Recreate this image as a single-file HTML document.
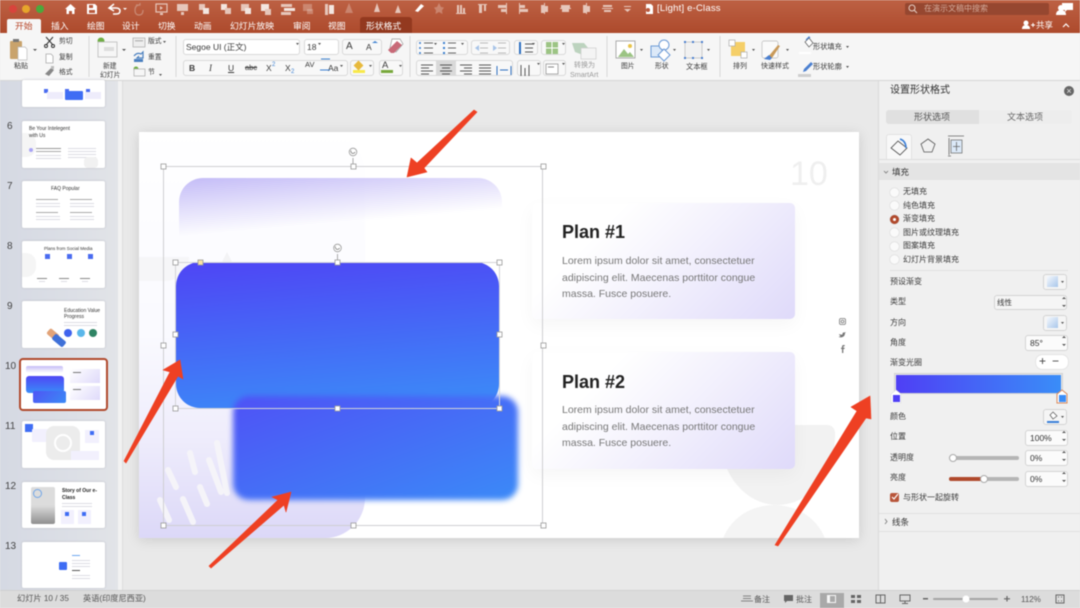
<!DOCTYPE html>
<html><head><meta charset="utf-8"><style>
*{box-sizing:border-box}
html,body{margin:0;padding:0}
body{width:1080px;height:608px;overflow:hidden;position:relative;background:#e9e9e9;font-family:"Liberation Sans","Noto Sans CJK SC",sans-serif;color:#333}
div,span.t{position:absolute}
.t{position:absolute;white-space:nowrap;font-size:8px;line-height:12px;color:#3a3a3a}
.w{color:#fff;font-size:8.8px}
.b{background:#f8f8f8;border:1px solid #d9d9d9;border-radius:3px}
.th{left:22px;width:83px;background:#fff;border-radius:2px;box-shadow:0 0 2px #b9b9c0;overflow:hidden}
.n{position:absolute;left:7px;font-size:10px;color:#444;line-height:12px}
.l{position:absolute;height:1px;background:#dcdce4}
.r{position:absolute;left:889.500px;width:9px;height:9px;border-radius:50%;background:#fafafa;box-shadow:0 0 1px #aaa}
.f{position:absolute;background:#fbfbfb;border:1px solid #d4d4d4;border-radius:3px;font-size:8.500px;line-height:14px;padding-left:4px;color:#333}
.s{position:absolute;background:#f5f5f5;border:1px solid #d4d4d4;border-radius:3px}
.card{position:absolute;left:532px;width:263px;border-radius:5px;background:linear-gradient(135deg,#fff 25%,#f3f1fd 55%,#dfdafa 100%);box-shadow:0 6px 18px rgba(0,0,0,.04)}
</style></head><body>
<div style="left:0;top:0;width:1080px;height:608px;overflow:hidden;filter:blur(.4px)">

<!-- title bar -->
<div style="left:0;top:0;width:1080px;height:33px;background:linear-gradient(#bd6144,#ad4a2c)"></div>
<div style="left:0;top:33px;width:1080px;height:48px;background:#f6f6f6;border-bottom:1px solid #d6d6d6"></div>
<div style="left:7px;top:19px;width:34px;height:14px;background:#f6f6f6;border-radius:2px 2px 0 0"></div>
<div style="left:360px;top:17px;width:52px;height:16px;background:#93391f;border-radius:3px 3px 0 0"></div>
<span class="t" style="left:15px;top:20px;font-size:8.800px;color:#b8472a">开始</span>
<span class="t w" style="left:51px;top:20px">插入</span>
<span class="t w" style="left:87px;top:20px">绘图</span>
<span class="t w" style="left:122px;top:20px">设计</span>
<span class="t w" style="left:158px;top:20px">切换</span>
<span class="t w" style="left:194px;top:20px">动画</span>
<span class="t w" style="left:230px;top:20px">幻灯片放映</span>
<span class="t w" style="left:293px;top:20px">审阅</span>
<span class="t w" style="left:328px;top:20px">视图</span>
<span class="t w" style="left:366px;top:20px">形状格式</span>
<span class="t w" style="left:657px;top:3px;font-size:9.500px;letter-spacing:.2px">[Light] e-Class</span>
<div style="left:905px;top:3px;width:144px;height:12px;background:#964730;border-radius:2px"></div>
<span class="t" style="left:924px;top:3px;color:#d3a999;font-size:8px">在演示文稿中搜索</span>
<span class="t w" style="left:1036px;top:19px;font-size:8.500px">共享</span>

<!-- window/title icons -->
<svg style="position:absolute;left:0;top:0" width="1080" height="81" fill="#f3e6e0">
<circle cx="13" cy="9" r="4" fill="#d8443c"/><circle cx="26" cy="9" r="4" fill="#e7a52c"/><circle cx="40" cy="9" r="4" fill="#4aa93c"/>
<path d="M65 9l5.500-5 5.500 5h-1.500v5h-2.500v-3h-3v3h-2.500v-5z" fill="#fff"/>
<path d="M87 4h8l2 2v8h-10z" fill="#fff"/><rect x="89" y="5" width="4" height="3" fill="#b9583c"/><rect x="89" y="10" width="6" height="3" fill="#b9583c"/>
<path d="M114 4l-5 4 5 3M110 8h6q4 0 4 3t-4 3h-3" fill="none" stroke="#fff" stroke-width="1.500"/>
<path d="M123 8h4l-2 2z" fill="#fff"/>
<path d="M136 5h4v-2M140 5q-5 0-5 5t4 5 4-5" fill="none" stroke="#c98a75" stroke-width="1.200"/>
<g fill="#e6c6ba">
<rect x="156" y="4" width="11" height="8" fill="none" stroke="#e6c6ba" stroke-width="1.200"/><path d="M160 6l3 2-3 2z"/><rect x="160" y="13" width="3" height="2"/>
<rect x="177" y="4" width="11" height="7"/><rect x="181" y="12" width="3" height="3"/>
<rect x="199" y="4" width="6" height="6"/><rect x="203" y="8" width="6" height="6" fill="#f3e6e0"/>
<rect x="221" y="4" width="6" height="6" fill="#f3e6e0"/><rect x="225" y="8" width="6" height="6"/>
<rect x="241" y="4" width="8" height="7"/><rect x="245" y="8" width="6" height="6" fill="#f3e6e0"/>
<rect x="261" y="4" width="8" height="7" fill="#f3e6e0"/><rect x="265" y="9" width="6" height="6"/>
<rect x="281" y="4" width="11" height="3"/><rect x="284" y="8" width="11" height="3" fill="#f3e6e0"/><rect x="281" y="12" width="10" height="3"/>
<rect x="303" y="4" width="9" height="7" opacity=".4"/><rect x="307" y="9" width="6" height="5" opacity=".4"/>
<rect x="325" y="4" width="3" height="11"/><rect x="329" y="5" width="5" height="9" fill="#f3e6e0"/>
<path d="M349 3l4 10h-8z" opacity=".4"/>
<path d="M377 3l3 9h-6z"/><path d="M398 5l3 8h-6z"/><path d="M415 11l6-7 3 2-6 6z" fill="#fff"/>
<path d="M439 3l2 4 3 .5-2 3 .5 3.500-3.500-2-3.500 2 .5-3.500-2-3 3-.5z" opacity=".4"/>
<rect x="457" y="5" width="2" height="8"/><rect x="460" y="5" width="2" height="8"/><rect x="463" y="8" width="2" height="5"/><rect x="456" y="13" width="10" height="1"/>
<rect x="478" y="4" width="9" height="1"/><rect x="479" y="5" width="3" height="8"/><rect x="484" y="5" width="2" height="6"/>
<rect x="498" y="5" width="8" height="3"/><rect x="501" y="9" width="5" height="3"/><rect x="506" y="3" width="1" height="11"/>
<rect x="519" y="3" width="1" height="11"/><rect x="520" y="5" width="5" height="3"/><rect x="520" y="9" width="8" height="3"/>
<rect x="541" y="5" width="3" height="8"/><rect x="545" y="6" width="3" height="6"/><rect x="544" y="3" width="1" height="11"/>
<rect x="561" y="5" width="9" height="3"/><rect x="562" y="9" width="7" height="3"/><rect x="560" y="8" width="11" height="1"/>
<rect x="583" y="5" width="3" height="8"/><rect x="587" y="6" width="3" height="6"/><rect x="586" y="3" width="1" height="11"/>
<rect x="603" y="5" width="9" height="2"/><rect x="602" y="8" width="11" height="1"/><rect x="604" y="10" width="7" height="2"/>
<rect x="624" y="6" width="7" height="1"/><path d="M624 9h7l-3.500 3z"/>
<path d="M646 4h5l2 2v8h-7z" fill="#fff"/><circle cx="648" cy="10" r="2" fill="#b9583c"/>
</g>
<circle cx="912" cy="8" r="3" fill="none" stroke="#e6cfc5"/><path d="M914 10l3 3" stroke="#e6cfc5"/>
<path d="M1062 3h11v7h-6l-2 2v-2h-3z" fill="#fff"/><circle cx="1061" cy="8" r="3" fill="#fff"/><path d="M1056 15q0-5 5-5t5 5z" fill="#fff"/>
<circle cx="1026" cy="23" r="2.500" fill="#fff"/><path d="M1022 29q0-4 4-4t4 4z" fill="#fff"/><path d="M1031 25h4M1033 23v4" stroke="#fff"/>
<path d="M1063 27l3-3 3 3" fill="none" stroke="#fff" stroke-width="1.200"/>
</svg>

<!-- ribbon texts -->
<span class="t" style="left:14px;top:61px;font-size:7px">粘贴</span>
<span class="t" style="left:59px;top:36px;font-size:6.800px">剪切</span>
<span class="t" style="left:59px;top:52px;font-size:6.800px">复制</span>
<span class="t" style="left:59px;top:67px;font-size:6.800px">格式</span>
<span class="t" style="left:103px;top:61px;font-size:6.800px">新建</span>
<span class="t" style="left:100px;top:70px;font-size:6.800px">幻灯片</span>
<span class="t" style="left:148px;top:36px;font-size:6.800px">版式</span>
<span class="t" style="left:148px;top:52px;font-size:6.800px">重置</span>
<span class="t" style="left:148px;top:67px;font-size:6.800px">节</span>

<div class="b" style="left:183px;top:39px;width:117px;height:16px;background:#fff"></div>
<span class="t" style="left:186px;top:41px;font-size:8.500px">Segoe UI (正文)</span>
<div class="b" style="left:304px;top:39px;width:35px;height:16px;background:#fff"></div>
<span class="t" style="left:307px;top:41px;font-size:8.500px">18</span>
<div class="b" style="left:342px;top:39px;width:40px;height:16px"></div>
<span class="t" style="left:346px;top:41px;font-size:10px;line-height:12px">A</span>
<span class="t" style="left:366px;top:41px;font-size:8.500px">A</span>
<div class="b" style="left:183px;top:60px;width:165px;height:16px"></div>
<span class="t" style="left:189px;top:62px;font-weight:bold;font-size:8.500px">B</span>
<span class="t" style="left:209px;top:62px;font-style:italic;font-size:9px;font-family:'Liberation Serif',serif">I</span>
<span class="t" style="left:228px;top:62px;text-decoration:underline;font-size:8.500px">U</span>
<span class="t" style="left:245px;top:62px;text-decoration:line-through;font-size:7.500px">abc</span>
<span class="t" style="left:266px;top:62px;font-size:8.500px">X</span><span class="t" style="left:272px;top:59px;font-size:6px;color:#3a7fd0">2</span>
<span class="t" style="left:285px;top:62px;font-size:8.500px">X</span><span class="t" style="left:291px;top:66px;font-size:6px;color:#3a7fd0">2</span>
<span class="t" style="left:305px;top:59px;font-size:7.500px">AV</span>
<span class="t" style="left:328px;top:62px;font-size:8.500px">Aa</span>
<div class="b" style="left:350px;top:60px;width:24px;height:16px"></div>
<div class="b" style="left:379px;top:60px;width:24px;height:16px"></div>
<span class="t" style="left:382px;top:60px;font-size:9.500px">A</span>
<div style="left:381px;top:70px;width:12px;height:3px;background:#78a83c"></div>
<div style="left:353px;top:70px;width:12px;height:3px;background:#f8e94a"></div>
<div style="left:355px;top:62px;width:7px;height:7px;background:#e7b93c;transform:rotate(45deg)"></div>

<div class="b" style="left:416px;top:40px;width:52px;height:15px"></div>
<div class="b" style="left:471px;top:40px;width:39px;height:15px"></div>
<div class="b" style="left:514px;top:40px;width:24px;height:15px"></div>
<div class="b" style="left:541px;top:40px;width:25px;height:15px"></div>
<div class="b" style="left:416px;top:60px;width:97px;height:16px"></div>
<div style="left:436px;top:60px;width:20px;height:16px;background:#d9d9d9"></div>
<div class="b" style="left:517px;top:60px;width:24px;height:16px"></div>
<div class="b" style="left:543px;top:60px;width:23px;height:16px"></div>
<span class="t" style="left:574px;top:60px;font-size:7px;color:#9a9a9a">转换为</span>
<span class="t" style="left:570px;top:69px;font-size:7.200px;color:#9a9a9a">SmartArt</span>
<span class="t" style="left:621px;top:61px;font-size:6.800px">图片</span>
<span class="t" style="left:655px;top:61px;font-size:6.800px">形状</span>
<span class="t" style="left:686px;top:61px;font-size:7.200px">文本框</span>
<span class="t" style="left:733px;top:61px;font-size:7px">排列</span>
<span class="t" style="left:761px;top:61px;font-size:7px">快速样式</span>
<span class="t" style="left:813px;top:41px;font-size:7.200px">形状填充</span>
<span class="t" style="left:813px;top:61px;font-size:7.200px">形状轮廓</span>

<!-- ribbon icons -->
<svg style="position:absolute;left:0;top:33px" width="880" height="48">
<g fill="none">
<rect x="10" y="8" width="12" height="18" rx="1" fill="#c9a36c"/><rect x="13" y="6" width="6" height="3" fill="#777"/><path d="M18 14h7l2 2v11h-9z" fill="#fff" stroke="#bbb" stroke-width=".7"/>
<path d="M33 16h4l-2 2z" fill="#555"/>
<path d="M46 4l7 8M53 4l-7 8" stroke="#333"/><circle cx="46" cy="13" r="1.500" stroke="#333"/><circle cx="53" cy="13" r="1.500" stroke="#333"/>
<path d="M46 21h5l2 2v7h-7z" fill="#fff" stroke="#aaa" stroke-width=".8"/>
<path d="M45 41l6-6 3 2-5 6z" fill="#888"/><rect x="51" y="33" width="3" height="3" fill="#bbb"/>
<circle cx="101" cy="8" r="3.500" fill="#6fae43"/><rect x="98" y="9" width="19" height="15" fill="#f6f6f6" stroke="#bbb" stroke-width=".8"/><rect x="104" y="14" width="10" height="4" fill="#ddd"/>
<path d="M122 16h4l-2 2z" fill="#555"/>
<rect x="133" y="5" width="12" height="9" fill="#eee" stroke="#aaa" stroke-width=".7"/><rect x="135" y="7" width="8" height="1.500" fill="#bbb"/>
<path d="M134 23q3-4 7-2l2-2v6h-6l2-2" stroke="#4a7fbf" stroke-width="1.200"/><rect x="134" y="26" width="9" height="3" fill="#4a7fbf"/>
<circle cx="136" cy="36" r="2.500" fill="#6fae43"/><rect x="134" y="36" width="11" height="7" fill="#f6f6f6" stroke="#aaa" stroke-width=".7"/>
<path d="M163 8h3l-1.500 2zM159 41h3l-1.500 2z" fill="#555"/>
<path d="M375 8l3 2h-6z" fill="#3a7fd0"/>
<path d="M392 6l8 0 3 5-7 8-6-4z" fill="#fff" stroke="#999" stroke-width=".7"/><path d="M388 17l9-9 5 4-8 8h-3z" fill="#c86a78"/>
<path d="M321 26h9M320 37h10" stroke="#3a7fd0" stroke-width="1"/>
<path d="M296 10h3l-1.500 2zM318 10h3l-1.500 2zM434 10h3l-1.500 2zM461 10h3l-1.500 2zM532 10h3l-1.500 2zM562 10h3l-1.500 2zM537 30h3l-1.500 2zM562 30h3l-1.500 2zM340 32h3l-1.500 2zM369 32h3l-1.500 2zM399 32h3l-1.500 2z" fill="#555"/>
<g stroke="#666"><path d="M424 10h9M424 15h9M424 20h9M448 10h8M448 15h8M448 20h8"/></g>
<g fill="#3a7fd0"><circle cx="420" cy="10" r="1"/><circle cx="420" cy="15" r="1"/><circle cx="420" cy="20" r="1"/><rect x="443" y="9" width="2" height="2"/><rect x="443" y="14" width="2" height="2"/><rect x="443" y="19" width="2" height="2"/></g>
<g stroke="#bbb"><path d="M480 10h8M480 15h8M480 20h8M498 10h8M498 15h8M498 20h8"/></g>
<path d="M475 15l4-3v6zM497 15l-4-3v6z" fill="#a8c4e8"/>
<path d="M520 9v12" stroke="#2d6fc0" stroke-width="2"/><path d="M525 11h8M525 15h8M525 19h8" stroke="#555"/>
<rect x="546" y="9" width="12" height="12" fill="#9cc484"/><path d="M552 9v12M546 15h12" stroke="#fff"/>
<g stroke="#555"><path d="M421 32h12M421 35h8M421 38h12M421 41h8"/><path d="M440 32h12M442 35h8M440 38h12M442 41h8"/><path d="M460 32h12M464 35h8M460 38h12M464 41h8"/><path d="M479 32h12M479 35h12M479 38h12M479 41h12"/></g>
<path d="M497 33v9M511 33v9M500 37h8" stroke="#2d6fc0"/>
<path d="M521 32v11M525 35v8M529 32v11" stroke="#555"/>
<rect x="546" y="31" width="12" height="10" fill="#fff" stroke="#888" stroke-width=".7"/><path d="M548 34h6" stroke="#888"/>
<path d="M572 10l12 0 5 6h-6v6l-8-3z" fill="#bcd3be"/><rect x="581" y="15" width="15" height="11" fill="#f4f4f4" stroke="#ccc" stroke-width=".7"/>
<rect x="616" y="8" width="19" height="17" fill="#fff" stroke="#999" stroke-width=".8"/><path d="M618 24l6-8 4 5 2-2 4 5z" fill="#9cc484"/><circle cx="630" cy="13" r="2" fill="#e8c44a"/>
<path d="M640 16h3l-1.500 2zM673 16h3l-1.500 2zM707 16h3l-1.500 2zM752 16h3l-1.500 2zM786 16h3l-1.500 2zM846 13h3l-1.500 2zM846 33h3l-1.500 2z" fill="#555"/>
<rect x="651" y="13" width="11" height="11" fill="#dce9f8" stroke="#6d9bd6"/><circle cx="664" cy="12" r="5" fill="#fff" stroke="#6d9bd6"/><path d="M664 16l6 6-6 6-6-6z" fill="#fff" stroke="#6d9bd6"/>
<rect x="685" y="9" width="17" height="16" fill="#f1f1f1" stroke="#bbb" stroke-width=".7"/><g fill="#4a7fd0"><rect x="684" y="8" width="2" height="2"/><rect x="701" y="8" width="2" height="2"/><rect x="684" y="24" width="2" height="2"/><rect x="701" y="24" width="2" height="2"/><rect x="692" y="8" width="2" height="2"/><rect x="692" y="24" width="2" height="2"/></g>
<rect x="731" y="9" width="14" height="14" fill="#f5cf68"/><rect x="729" y="7" width="6" height="6" fill="#fff" stroke="#aaa" stroke-width=".7"/><rect x="741" y="19" width="6" height="6" fill="#fff" stroke="#aaa" stroke-width=".7"/>
<rect x="762" y="8" width="16" height="17" rx="2" fill="#fafafa" stroke="#bbb" stroke-width=".7"/><path d="M768 24l10-12 2 1-8 12z" fill="#c99a5a"/><path d="M764 26l5-4 3 3-2 2z" fill="#4a7fd0"/>
<path d="M805 9l4-4 4 5-4 4z" fill="#fff" stroke="#555" stroke-width=".7"/><path d="M806 7l3-3 1 1" stroke="#4a7fd0" stroke-width="1.200"/><rect x="799" y="19" width="12" height="2" fill="#fff"/>
<path d="M804 36l7-7 2 2-7 7-3 1z" fill="#4a7fd0"/><rect x="798" y="41" width="13" height="3" fill="#cfcfcf"/>
</g>
<g stroke="#d9d9d9"><path d="M89 3v41M176 3v41M410 3v41M607 3v41M720 3v41"/></g>
</svg>

<!-- left panel -->
<div style="left:0;top:81px;width:118px;height:509px;background:linear-gradient(90deg,#d5d9e3,#dcdfe6 60%,#e2e4e8)"></div>
<div style="left:118px;top:81px;width:4px;height:509px;background:#f2f2f2"></div>
<div style="left:122px;top:81px;width:1px;height:509px;background:#dcdcdc"></div>

<div class="th" style="top:80px;height:27px">
<div style="left:22px;top:9px;width:4px;height:4px;background:#4a6cf0"></div><div style="left:43px;top:9px;width:4px;height:4px;background:#4a6cf0"></div><div style="left:64px;top:9px;width:4px;height:4px;background:#4a6cf0"></div>
<div style="left:43px;top:11px;width:18px;height:9px;background:#3f6df4;border-radius:1px"></div>
<div style="left:25px;top:12px;width:16px;height:7px;background:#eeecfb"></div><div style="left:63px;top:12px;width:16px;height:7px;background:#eeecfb"></div>
</div>
<span class="n" style="top:121px">6</span>
<div class="th" style="top:121px;height:47px">
<div style="left:0;top:12px;width:14px;height:24px;background:#f5f5f5;border-radius:0 10px 10px 0"></div>
<span class="t" style="left:7px;top:5px;font-size:5px;line-height:6.500px;white-space:normal;width:50px;color:#333">Be Your Intelegent with Us</span>
<div style="left:7px;top:27px;width:4px;height:4px;background:#a9a5f5;border-radius:50%"></div>
<div class="l" style="left:14px;top:27px;width:25px;background:#999"></div><div class="l" style="left:14px;top:30px;width:25px;background:#aaa"></div>
<div class="l" style="left:14px;top:34px;width:25px"></div><div class="l" style="left:14px;top:37px;width:25px"></div>
<div class="l" style="left:46px;top:27px;width:28px"></div><div class="l" style="left:46px;top:30px;width:28px"></div><div class="l" style="left:46px;top:33px;width:28px"></div><div class="l" style="left:46px;top:36px;width:28px"></div>
<div style="left:62px;top:36px;width:14px;height:11px;background:#f1f1f1;border-radius:4px"></div>
</div>
<span class="n" style="top:181px">7</span>
<div class="th" style="top:181px;height:47px">
<span class="t" style="left:29px;top:5px;font-size:5px;line-height:7px;color:#333">FAQ Popular</span>
<div class="l" style="left:14px;top:18px;width:22px;background:#aaa"></div><div class="l" style="left:14px;top:22px;width:24px"></div><div class="l" style="left:14px;top:25px;width:24px"></div>
<div class="l" style="left:48px;top:18px;width:22px;background:#aaa"></div><div class="l" style="left:48px;top:22px;width:24px"></div><div class="l" style="left:48px;top:25px;width:24px"></div>
<div class="l" style="left:14px;top:31px;width:22px;background:#aaa"></div><div class="l" style="left:14px;top:35px;width:24px"></div><div class="l" style="left:14px;top:38px;width:24px"></div>
<div class="l" style="left:48px;top:31px;width:22px;background:#aaa"></div><div class="l" style="left:48px;top:35px;width:24px"></div><div class="l" style="left:48px;top:38px;width:24px"></div>
</div>
<span class="n" style="top:241px">8</span>
<div class="th" style="top:241px;height:47px">
<div style="left:0;top:12px;width:14px;height:24px;background:#f5f5f5;border-radius:0 10px 10px 0"></div>
<span class="t" style="left:22px;top:4px;font-size:4.500px;line-height:7px;color:#333">Plans from Social Media</span>
<div style="left:23px;top:13px;width:5px;height:5px;background:#4a6cf0"></div><div style="left:45px;top:13px;width:5px;height:5px;background:#4a6cf0"></div><div style="left:66px;top:13px;width:5px;height:5px;background:#4a6cf0"></div>
<div class="l" style="left:15px;top:37px;width:10px;background:#888"></div><div class="l" style="left:37px;top:37px;width:10px;background:#888"></div><div class="l" style="left:58px;top:37px;width:10px;background:#888"></div>
<div class="l" style="left:17px;top:40px;width:6px"></div><div class="l" style="left:39px;top:40px;width:6px"></div><div class="l" style="left:60px;top:40px;width:6px"></div>
</div>
<span class="n" style="top:301px">9</span>
<div class="th" style="top:301px;height:47px">
<span class="t" style="left:42px;top:7px;font-size:5px;line-height:6px;white-space:normal;width:38px;color:#333">Education Value Progress</span>
<div class="l" style="left:42px;top:21px;width:33px"></div><div class="l" style="left:42px;top:24px;width:33px"></div>
<div style="left:42px;top:28px;width:8px;height:8px;border-radius:50%;background:#3f63ee"></div><div style="left:55px;top:28px;width:8px;height:8px;border-radius:50%;background:#5ab7ea"></div><div style="left:67px;top:28px;width:8px;height:8px;border-radius:50%;background:#2f8464"></div>
<div style="left:25px;top:30px;width:12px;height:7px;background:#e2a378;transform:rotate(40deg);border-radius:2px"></div>
<div style="left:30px;top:36px;width:14px;height:7px;background:#3f70d8;transform:rotate(40deg);border-radius:2px"></div>
</div>
<span class="n" style="top:361px;left:5px">10</span>
<div style="left:19px;top:358px;width:89px;height:53px;border:2px solid #b0492c;border-radius:4px;background:#fff"></div>
<div style="left:21px;top:360px;width:85px;height:49px;overflow:hidden;border-radius:2px">
<div style="left:5px;top:6px;width:37px;height:7px;background:linear-gradient(#c5bdf7,#fff);border-radius:2px"></div>
<div style="left:5px;top:16px;width:38px;height:17px;background:linear-gradient(#4f47f5,#3a8cf8);border-radius:3px"></div>
<div style="left:12px;top:31px;width:33px;height:12px;background:linear-gradient(135deg,#4f55f5,#3b8af6);border-radius:2px"></div>
<div style="left:49px;top:9px;width:30px;height:14px;background:linear-gradient(135deg,#fff,#dfdafa)"></div>
<div style="left:49px;top:26px;width:30px;height:14px;background:linear-gradient(135deg,#fff,#dfdafa)"></div>
<div class="l" style="left:52px;top:12px;width:8px;background:#777"></div><div class="l" style="left:52px;top:29px;width:8px;background:#777"></div>
</div>
<span class="n" style="top:421px;left:5px">11</span>
<div class="th" style="top:421px;height:47px">
<div style="left:3px;top:3px;width:8px;height:8px;background:#3f6df4"></div>
<div style="left:10px;top:8px;width:24px;height:13px;background:#f2f0fd;border-radius:1px"></div>
<div style="left:24px;top:5px;width:34px;height:34px;background:#ececec;border-radius:8px"></div>
<div style="left:32px;top:13px;width:18px;height:18px;border:2px solid #fff;border-radius:50%"></div>
<div style="left:63px;top:9px;width:14px;height:13px;background:#f2f0fd"></div>
<div style="left:49px;top:30px;width:28px;height:9px;background:#f2f0fd"></div>
<div style="left:68px;top:10px;width:4px;height:4px;background:#3f6df4"></div>
</div>
<span class="n" style="top:481px;left:5px">12</span>
<div class="th" style="top:482px;height:46px">
<div style="left:9px;top:5px;width:24px;height:37px;border-radius:2px;background:linear-gradient(#dcdcdc 50%,#8f8f8f)"></div>
<div style="left:11px;top:7px;width:9px;height:9px;border:1px solid #6fa5e8;border-radius:50%"></div>
<span class="t" style="left:40px;top:6px;font-size:5px;line-height:6.500px;white-space:normal;width:36px;font-weight:bold;color:#222">Story of Our e-Class</span>
<div class="l" style="left:40px;top:21px;width:30px"></div><div class="l" style="left:40px;top:24px;width:30px"></div>
<div style="left:39px;top:28px;width:13px;height:14px;background:#f2f0fd"></div><div style="left:56px;top:28px;width:13px;height:14px;background:#f2f0fd"></div>
<div style="left:43px;top:30px;width:4px;height:4px;background:#3f6df4"></div><div style="left:60px;top:30px;width:4px;height:4px;background:#3f6df4"></div>
</div>
<span class="n" style="top:541px;left:5px">13</span>
<div class="th" style="top:542px;height:46px">
<div style="left:37px;top:20px;width:8px;height:8px;background:#3f6df4;border-radius:1px"></div>
<div class="l" style="left:50px;top:13px;width:8px;background:#6ea8f0"></div>
<div class="l" style="left:50px;top:18px;width:18px"></div><div class="l" style="left:50px;top:21px;width:18px"></div><div class="l" style="left:50px;top:24px;width:18px"></div>
<div class="l" style="left:50px;top:28px;width:8px;background:#555"></div>
<div class="l" style="left:50px;top:33px;width:18px"></div><div class="l" style="left:50px;top:36px;width:18px"></div>
</div>

<!-- slide -->
<div style="left:139px;top:132px;width:720px;height:406px;background:#fff;box-shadow:0 2px 12px rgba(0,0,0,.13);overflow:hidden">
<div style="left:581px;top:293px;width:115px;height:80px;background:#f2f2f2;border-radius:8px 8px 60px 60px/8px 8px 72px 72px"></div>
<div style="left:581px;top:373px;width:108px;height:70px;background:#f4f4f4;border-radius:54px 54px 0 0/50px 50px 0 0"></div>
<div style="left:0;top:0;width:226px;height:406px;border-radius:0 40px 40px 0;background:linear-gradient(#fff 0%,#fafaff 50%,#efedfc 75%,#dcd8f8 100%)"></div>
<div style="left:0;top:125px;width:50px;height:24px;background:#f6f6f8;border-radius:0 0 40px 0"></div>
<div style="left:73px;top:120px;width:30px;height:30px;background:#f3f3f5;clip-path:polygon(50% 0,100% 100%,0 100%)"></div>
<svg style="position:absolute;left:0;top:0" width="226" height="406" stroke="#f5f4f9" stroke-width="6" stroke-linecap="round">
<path d="M78 311l10 50M51 321l5 19M70 328l12 32M29 338l8 17M61 355l7 17M44 367l10 23M21 368l9 20"/>
</svg>
<div style="left:40px;top:46px;width:323px;height:90px;border-radius:24px 24px 0 0;background:linear-gradient(175deg,#c4bcf7 0%,rgba(255,255,255,0) 50%)"></div>
<span class="t" style="left:651px;top:24px;font-size:34px;line-height:36px;color:#efefef">10</span>
</div>

<div class="card" style="top:203px;height:116px"></div>
<div class="card" style="top:352px;height:117px"></div>
<span class="t" style="left:562px;top:222px;font-size:18px;line-height:20px;font-weight:bold;color:#222">Plan #1</span>
<span class="t" style="left:562px;top:253px;font-size:10.500px;line-height:16.500px;color:#777;white-space:pre">Lorem ipsum dolor sit amet, consectetuer
adipiscing elit. Maecenas porttitor congue
massa. Fusce posuere.</span>
<span class="t" style="left:562px;top:372px;font-size:18px;line-height:20px;font-weight:bold;color:#222">Plan #2</span>
<span class="t" style="left:562px;top:402px;font-size:10.500px;line-height:16.500px;color:#777;white-space:pre">Lorem ipsum dolor sit amet, consectetuer
adipiscing elit. Maecenas porttitor congue
massa. Fusce posuere.</span>

<div style="left:176px;top:262px;width:323px;height:146px;border-radius:24px;background:linear-gradient(175deg,#4f45f5,#3b8ef8)"></div>
<div style="left:233px;top:396px;width:285px;height:104px;border-radius:16px;background:linear-gradient(160deg,#4f52f6,#3b8af7);filter:blur(3px)"></div>

<!-- selection + arrows + social -->
<svg style="position:absolute;left:0;top:0" width="1080" height="608">
<rect x="163.500" y="166.500" width="379" height="359" fill="none" stroke="#cfcfd2"/>
<rect x="175.500" y="262.500" width="324" height="146" fill="none" stroke="#d4d4d8"/>
<path d="M353 158v8M337.500 254v8" stroke="#aaa"/>
<g fill="#fff" stroke="#999" stroke-width=".8">
<circle cx="353" cy="152" r="3.800"/><circle cx="337.500" cy="248" r="3.800"/>
<rect x="161" y="164" width="5" height="5"/><rect x="351" y="164" width="5" height="5"/><rect x="541" y="164" width="5" height="5"/>
<rect x="161" y="343" width="5" height="5"/><rect x="541" y="343" width="5" height="5"/>
<rect x="161" y="523" width="5" height="5"/><rect x="351" y="523" width="5" height="5"/><rect x="541" y="523" width="5" height="5"/>
<rect x="173" y="260" width="5" height="5"/><rect x="335" y="260" width="5" height="5"/><rect x="497" y="260" width="5" height="5"/>
<rect x="173" y="332" width="5" height="5"/><rect x="497" y="332" width="5" height="5"/>
<rect x="173" y="406" width="5" height="5"/><rect x="335" y="406" width="5" height="5"/><rect x="497" y="406" width="5" height="5"/>
<rect x="198" y="260" width="5" height="5" fill="#fbe3a2"/>
</g>
<path d="M351 150.500a2 2 0 1 0 4 1.500M335.500 246.500a2 2 0 1 0 4 1.500" fill="none" stroke="#666" stroke-width=".7"/>
<g fill="#ee4023" stroke="#ee4023" stroke-width=".6" stroke-linejoin="round">
<path d="M474 110L477 112L424 168L427 172L407 177L411 158L417 163z"/>
<path d="M124 461L126 463L178 376L183 379L180 360L163 370L170 372z"/>
<path d="M209 566L211 568L284 505L286 512L291 492L272 497L278 500z"/>
<path d="M775 545L778 546L866 418L871 419L870 396L851 407L857 411z"/>
</g>
<g fill="none" stroke="#777" stroke-width=".8"><rect x="839.500" y="318.500" width="6" height="6" rx="1.500"/><circle cx="842.500" cy="321.500" r="1.400"/></g>
<path d="M839 334q2 1 3.500 .5l0-1q.5-1.500 2-1l1.500-.5-1 1.200q0 3-3 4-2 .5-3.500-.5 1.500 0 2-.8-1.500-.5-1.500-2.400z" fill="#777"/>
<path d="M842 353v-4h-1v-1.300h1v-1q0-1.700 1.700-1.700h1v1.300h-.7q-.7 0-.7.6v.8h1.400l-.2 1.300h-1.200v4z" fill="#777"/>
</svg>

<!-- right panel -->
<div style="left:878px;top:81px;width:202px;height:509px;background:#f0f0f0;border-left:1px solid #d9d9d9"></div>
<span class="t" style="left:890px;top:85px;font-size:10px;color:#333">设置形状格式</span>
<div style="left:1064px;top:86px;width:10px;height:10px;background:#666;border-radius:50%;color:#eee;font-size:9px;line-height:10px;text-align:center">×</div>
<div style="left:886px;top:110px;width:186px;height:14px;background:#ededed;border-radius:3px"></div>
<div style="left:886px;top:110px;width:93px;height:14px;background:#e0e0e0;border-radius:3px 0 0 3px"></div>
<span class="t" style="left:914px;top:111px;color:#555;font-size:9px">形状选项</span>
<span class="t" style="left:1007px;top:111px;color:#666;font-size:9px">文本选项</span>
<div style="left:886px;top:134px;width:26px;height:25px;background:#f8f8f8;border:1px solid #e2e2e2;border-bottom:0;border-radius:3px 3px 0 0"></div>
<div style="left:878px;top:159px;width:202px;height:1px;background:#dedede"></div>
<div style="left:879px;top:163px;width:201px;height:17px;background:#e4e4e4"></div>
<span class="t" style="left:892px;top:166px;font-size:8.500px;color:#333">填充</span>
<div class="r" style="top:187.500px"></div><div class="r" style="top:201px"></div>
<div class="r" style="top:214.500px;background:#fff;border:3px solid #b0492c"></div>
<div class="r" style="top:228px"></div><div class="r" style="top:241.500px"></div><div class="r" style="top:255px"></div>
<span class="t" style="left:903px;top:186px">无填充</span>
<span class="t" style="left:903px;top:200px">纯色填充</span>
<span class="t" style="left:903px;top:213px">渐变填充</span>
<span class="t" style="left:903px;top:227px">图片或纹理填充</span>
<span class="t" style="left:903px;top:240px">图案填充</span>
<span class="t" style="left:903px;top:254px">幻灯片背景填充</span>
<div style="left:890px;top:270px;width:178px;height:1px;background:#e0e0e0"></div>
<span class="t" style="left:890px;top:276px">预设渐变</span>
<span class="t" style="left:890px;top:296px">类型</span>
<span class="t" style="left:890px;top:317px">方向</span>
<span class="t" style="left:890px;top:337px">角度</span>
<span class="t" style="left:890px;top:357px">渐变光圈</span>
<span class="t" style="left:890px;top:411px">颜色</span>
<span class="t" style="left:890px;top:431px">位置</span>
<span class="t" style="left:890px;top:452px">透明度</span>
<span class="t" style="left:890px;top:472px">亮度</span>
<div class="s" style="left:1043px;top:274px;width:24px;height:16px"></div>
<div class="s" style="left:994px;top:295px;width:73px;height:15px;font-size:7.500px;line-height:13px;padding-left:2px;color:#333">线性</div>
<div class="s" style="left:1043px;top:315px;width:24px;height:16px"></div>
<div style="left:1047px;top:276px;width:11px;height:11px;background:linear-gradient(135deg,#f6f9fd,#a8c6ea)"></div>
<div style="left:1047px;top:317px;width:11px;height:11px;background:linear-gradient(135deg,#f6f9fd,#a8c6ea)"></div>
<div class="f" style="left:1025px;top:335px;width:43px;height:16px">85°</div>
<div style="left:1036px;top:355px;width:32px;height:14px;background:#fff;border-radius:6px;box-shadow:0 0 1px #aaa;font-size:12px;line-height:12px;color:#444;text-align:left;padding-left:3px;letter-spacing:6px">+−</div>
<div style="left:894px;top:373px;width:169px;height:21px;background:#e6e6e6;border:1px solid #d2d2d2"></div>
<div style="left:896px;top:375px;width:165px;height:18px;background:linear-gradient(90deg,#4f3ff5,#3a8df8)"></div>
<svg style="position:absolute;left:890px;top:389px" width="180" height="16">
<path d="M1 14V5l5-4 5 4v9z" fill="#fff" stroke="#ddd" stroke-width=".6"/><rect x="3" y="6" width="7" height="7" fill="#4f3ff5"/>
<path d="M167 14V5l5-4 5 4v9z" fill="#fff" stroke="#d98a5c"/><rect x="169" y="6" width="7" height="7" fill="#3a8df8"/>
</svg>
<div class="s" style="left:1043px;top:409px;width:24px;height:16px"></div>
<svg style="position:absolute;left:1043px;top:409px" width="24" height="16"><path d="M7 6l3-3 4 4-4 3z" fill="#fff" stroke="#555" stroke-width=".7"/><rect x="4" y="12" width="12" height="2" fill="#3a7fd8"/><path d="M18 7h3l-1.500 2z" fill="#555"/></svg>
<div class="f" style="left:1025px;top:430px;width:43px;height:16px">100%</div>
<div class="f" style="left:1025px;top:450px;width:43px;height:16px">0%</div>
<div class="f" style="left:1025px;top:471px;width:43px;height:16px">0%</div>
<div style="left:949px;top:456px;width:70px;height:4px;background:#b5b5b5;border-radius:2px"></div>
<div style="left:949px;top:454px;width:8px;height:8px;background:#fff;border:1px solid #aaa;border-radius:50%"></div>
<div style="left:949px;top:477px;width:70px;height:4px;background:#b5b5b5;border-radius:2px"></div>
<div style="left:949px;top:477px;width:35px;height:4px;background:#b0492c;border-radius:2px"></div>
<div style="left:980px;top:475px;width:8px;height:8px;background:#fff;border:1px solid #aaa;border-radius:50%"></div>
<div style="left:890px;top:493px;width:9px;height:9px;background:#b8553a;border-radius:2px"></div>
<span class="t" style="left:903px;top:492px">与形状一起旋转</span>
<div style="left:879px;top:513px;width:201px;height:1px;background:#e0e0e0"></div>
<div style="left:879px;top:531px;width:201px;height:1px;background:#e0e0e0"></div>
<span class="t" style="left:892px;top:516px;font-size:8.500px;color:#333">线条</span>

<svg style="position:absolute;left:878px;top:130px" width="202" height="40" fill="none" stroke="#555" stroke-width=".8">
<path d="M13 18l7-7 9 7-7 7z" stroke="#444"/><path d="M22 9q6 2 6 9" stroke="#3a7fd8" stroke-width="1.500"/>
<path d="M50 9l7 5-3 8h-8l-3-8z"/>
<rect x="73" y="10" width="11" height="13" fill="#dbe9f8" stroke="#777"/><path d="M70 6h16M70 26h3M71 8v17M78.500 12v9M75 16.500h7" stroke="#666"/>
</svg>
<svg style="position:absolute;left:878px;top:160px" width="202" height="370" fill="none" stroke="#777" stroke-width=".8">
<path d="M6 11l2 2 2-2"/>
<path d="M7 359l2 2.500-2 2.500"/>
<path d="M14 337l2 2 4-5" stroke="#fff" stroke-width="1.200"/>
</svg>
<svg style="position:absolute;left:1060px;top:295px" width="8" height="200" fill="#555">
<path d="M2 4l2-2 2 2zM2 10l2 2 2-2z"/>
<path d="M2 43l2-2 2 2zM2 49l2 2 2-2z"/>
<path d="M2 138l2-2 2 2zM2 144l2 2 2-2z"/>
<path d="M2 158l2-2 2 2zM2 164l2 2 2-2z"/>
<path d="M2 179l2-2 2 2zM2 185l2 2 2-2z"/>
</svg>
<svg style="position:absolute;left:1043px;top:274px" width="24" height="60" fill="#555"><path d="M18 7h3l-1.500 2zM18 48h3l-1.500 2z"/></svg>

<!-- status bar -->
<div style="left:0;top:590px;width:1080px;height:18px;background:#dcdcdc;border-top:1px solid #cfcfcf"></div>
<span class="t" style="left:17px;top:593px;font-size:8.200px;color:#555">幻灯片 10 / 35</span>
<span class="t" style="left:83px;top:593px;font-size:8.200px;color:#555">英语(印度尼西亚)</span>
<span class="t" style="left:754px;top:594px;color:#555">备注</span>
<span class="t" style="left:796px;top:594px;color:#555">批注</span>
<div style="left:820px;top:593px;width:24px;height:15px;background:#a9a9a9"></div>
<span class="t" style="left:1021px;top:594px;font-size:8px;color:#555">112%</span>
<svg style="position:absolute;left:740px;top:590px" width="340" height="18" fill="#666">
<path d="M3 6h8M3 8.500h8M1 11h12" stroke="#666" stroke-width=".8"/>
<path d="M44 5h9v6h-6l-2 2v-2h-1z"/>
<rect x="87" y="5" width="9" height="8" fill="#f6f6f6"/><rect x="90" y="6" width="5" height="6" fill="#a9a9a9"/>
<rect x="111" y="5" width="4" height="3"/><rect x="117" y="5" width="4" height="3"/><rect x="111" y="10" width="4" height="3"/><rect x="117" y="10" width="4" height="3"/>
<path d="M136 5h9v8h-9zM140.500 5v8" fill="none" stroke="#666"/>
<path d="M160 5h10v6h-10zM165 11v2M162 13.500h6" fill="none" stroke="#666"/>
<rect x="183" y="8" width="5" height="1.500"/>
<rect x="193" y="8" width="65" height="2" rx="1" fill="#a5a5a5"/><circle cx="226" cy="9" r="3.500" fill="#fff"/>
<path d="M264 8.800h6M267 6v5.500" stroke="#666" stroke-width="1.200"/>
<path d="M316 5h8v8h-8z" fill="none" stroke="#666"/><path d="M318 7h1M321 7h1M318 11h1M321 11h1" stroke="#666"/>
</svg>
</div>
</body></html>
